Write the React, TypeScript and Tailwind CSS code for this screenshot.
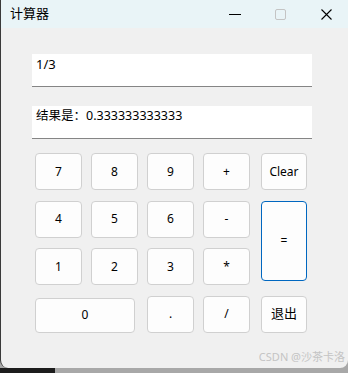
const font = { fontFamily: '"Noto Sans", "Noto Sans CJK SC", sans-serif' };

function Btn({ label, className = 'border-[#d0d0d0]' }: { label: string; className?: string }) {
  return (
    <button
      className={`flex items-center justify-center rounded-[4px] border bg-[#fdfdfd] text-[12px] text-black ${className}`}
    >
      {label}
    </button>
  );
}

export default function App() {
  return (
    <div className="w-[348px] h-[373px] bg-[#a8a8a8] relative overflow-hidden" style={font}>
      <div className="w-[348px] h-[368px] bg-[#f0f0f0] rounded-b-[8px] border-l border-[#3a3a3a] flex flex-col">
        {/* title bar */}
        <div className="h-[28px] bg-[#e9f4f7] flex items-center pl-[9px] shrink-0">
          <span className="text-[13px] text-black">计算器</span>
          <div className="ml-auto flex items-center h-full">
            <svg width="12" height="12" viewBox="0 0 12 12" className="mr-[34px]">
              <line x1="0" y1="6.5" x2="12" y2="6.5" stroke="#000" strokeWidth="1" />
            </svg>
            <svg width="11" height="11" viewBox="0 0 11 11" className="mr-[35px]">
              <rect x="0.5" y="0.5" width="10" height="10" rx="1.5" fill="none" stroke="#c4c4c4" strokeWidth="1" />
            </svg>
            <svg width="11" height="11" viewBox="0 0 11 11" className="mr-[16px]">
              <path d="M0.5 0.5 L10.5 10.5 M10.5 0.5 L0.5 10.5" stroke="#000" strokeWidth="1.1" />
            </svg>
          </div>
        </div>

        {/* inputs */}
        <div className="pl-[31px] pt-[26px] flex flex-col gap-[19px]">
          <div className="w-[280px] h-[33px] bg-white border-b border-[#858585] px-[4px] pt-[1px] text-[13px] leading-[18px] text-black">
            1/3
          </div>
          <div className="w-[280px] h-[33px] bg-white border-b border-[#858585] px-[4px] pt-[1px] text-[12.5px] leading-[18px] text-black">
            结果是：0.333333333333
          </div>
        </div>

        {/* keypad */}
        <div className="pl-[34px] pt-[14px] grid grid-cols-[47px_47px_47px_47px_47px] grid-rows-[37px_37px_37px_37px] gap-x-[9px] gap-y-[10.5px]">
          <Btn label="7" />
          <Btn label="8" />
          <Btn label="9" />
          <Btn label="+" />
          <Btn label="Clear" className="border-[#d0d0d0] ml-[2px] w-[46px]" />

          <Btn label="4" />
          <Btn label="5" />
          <Btn label="6" />
          <Btn label="-" />
          <Btn label="=" className="border-[#0067c0] ml-[2px] w-[46px] row-span-2 h-[80px] self-start" />

          <Btn label="1" />
          <Btn label="2" />
          <Btn label="3" />
          <Btn label="*" />

          <Btn label="0" className="border-[#d0d0d0] col-span-2 w-[100px] mt-[2px]" />
          <Btn label="." />
          <Btn label="/" />
          <Btn label="退出" className="border-[#d0d0d0] ml-[2px] w-[46px] text-[13px]" />
        </div>

        <div className="mt-auto mb-[3px] pr-[3px] text-right text-[11px] text-[#c4c4c4]">CSDN @沙茶卡洛</div>
      </div>
      <div className="absolute left-0 bottom-0 w-[55px] h-[5px] bg-[#1c1c1c]" />
    </div>
  );
}
